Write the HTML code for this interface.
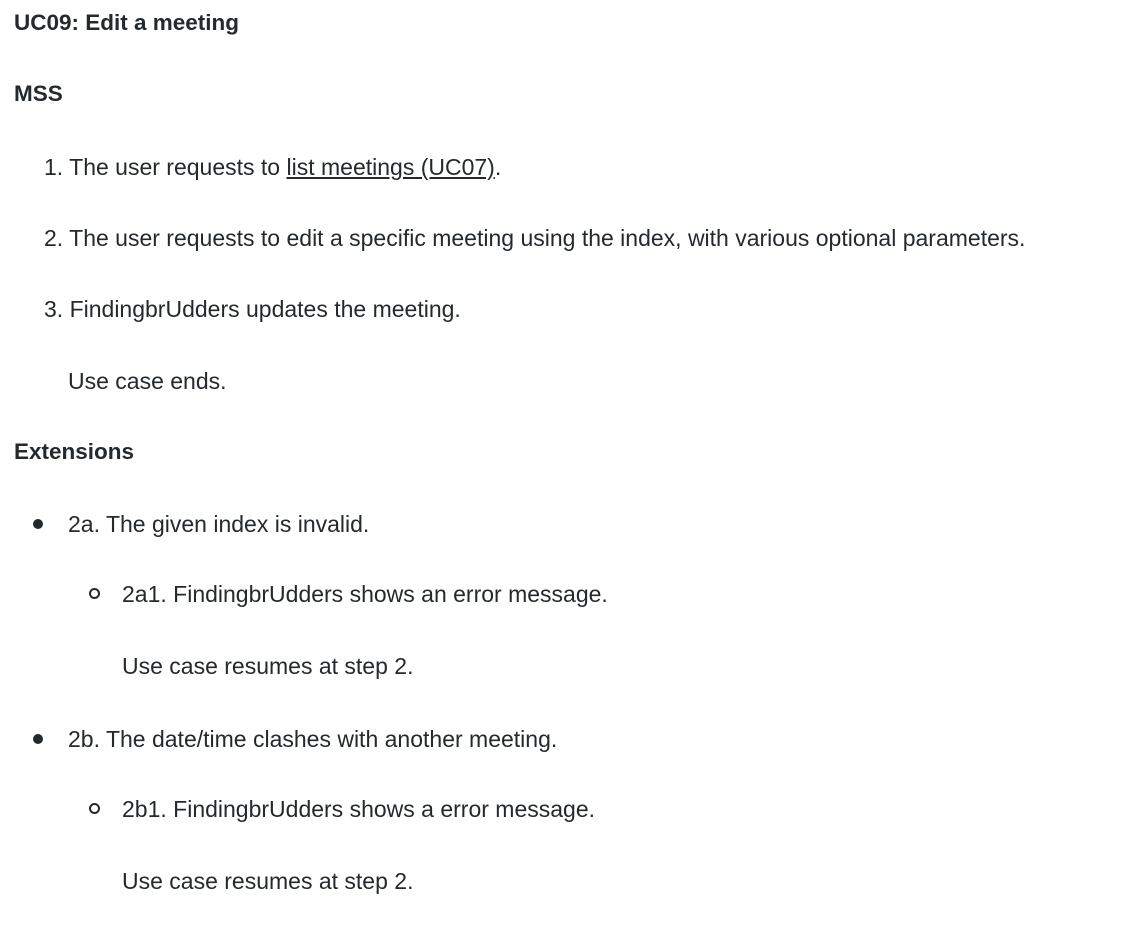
<!DOCTYPE html>
<html><head><meta charset="utf-8"><style>
body{margin:0;width:1134px;height:928px;background:#fff;position:relative;overflow:hidden;font-family:"Liberation Sans",sans-serif;color:#24292e;font-size:23px}
.l{position:absolute;line-height:26px;white-space:nowrap}
.h{font-weight:bold;font-size:22.5px}
a{color:#24292e;text-decoration:underline}
.dot{position:absolute;width:10px;height:10px;border-radius:50%;background:#24292e}
.circ{position:absolute;width:7px;height:7px;border-radius:50%;border:2px solid #24292e}
</style></head><body>
<div class="l h" style="left:14px;top:10px">UC09: Edit a meeting</div>
<div class="l h" style="left:14px;top:81px">MSS</div>
<div class="l" style="left:44px;top:154px">1. The user requests to <a>list meetings (UC07)</a>.</div>
<div class="l" style="left:44px;top:225px">2. The user requests to edit a specific meeting using the index, with various optional parameters.</div>
<div class="l" style="left:44px;top:296px">3. FindingbrUdders updates the meeting.</div>
<div class="l" style="left:68px;top:368px">Use case ends.</div>
<div class="l h" style="left:14px;top:439px">Extensions</div>
<div class="dot" style="left:33px;top:519px"></div>
<div class="l" style="left:68px;top:511px">2a. The given index is invalid.</div>
<div class="circ" style="left:89px;top:588px"></div>
<div class="l" style="left:122px;top:581px">2a1. FindingbrUdders shows an error message.</div>
<div class="l" style="left:122px;top:653px">Use case resumes at step 2.</div>
<div class="dot" style="left:33px;top:734px"></div>
<div class="l" style="left:68px;top:726px">2b. The date/time clashes with another meeting.</div>
<div class="circ" style="left:89px;top:803px"></div>
<div class="l" style="left:122px;top:796px">2b1. FindingbrUdders shows a error message.</div>
<div class="l" style="left:122px;top:868px">Use case resumes at step 2.</div>
</body></html>
